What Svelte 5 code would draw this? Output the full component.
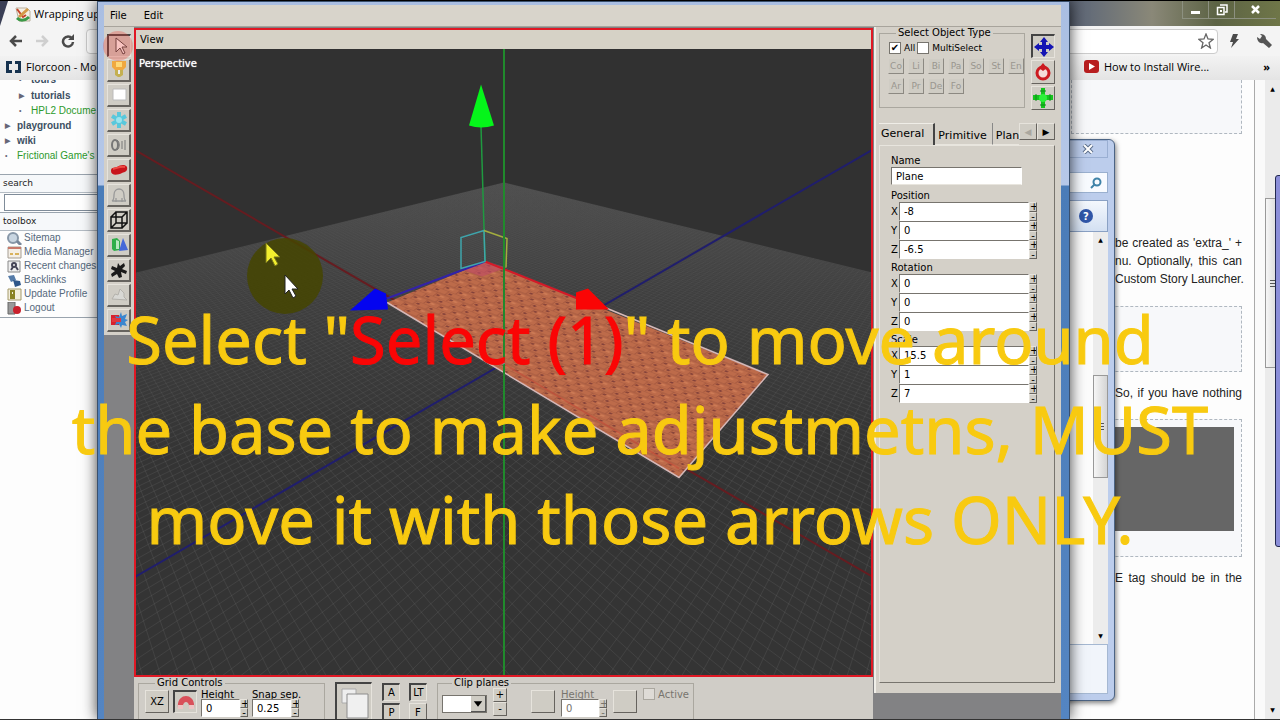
<script lang="ts">
  const tools: string[] = [
    'select', 'light', 'billboard', 'particle', 'sound', 'static',
    'entity', 'area', 'primitive', 'decal', 'fog', 'combo'
  ];

  const objectTypes: string[] = ['Co', 'Li', 'Bi', 'Pa', 'So', 'St', 'En', 'Ar', 'Pr', 'De', 'Fo'];

  const vectors = [
    { name: 'Position', values: ['-8', '0', '-6.5'] },
    { name: 'Rotation', values: ['0', '0', '0'] },
    { name: 'Scale', values: ['15.5', '1', '7'] }
  ];
  const axes = ['X', 'Y', 'Z'];

  const toolbox: string[] = [
    'Sitemap', 'Media Manager', 'Recent changes', 'Backlinks', 'Update Profile', 'Logout'
  ];

  // ground point to screen, camera looks along the diagonal of the grid
  function project(u: number, v: number) {
    const w = 1 + u + v;
    return { x: 504 + (542 * (u - v)) / w, y: 49 + 314 / w };
  }

  const size = 0.68;
  const near = 0.3;
  const lines = 80;

  function gridPath(): string {
    let d = '';
    for (let i = -lines; i <= lines; i++) {
      const c = (i / lines) * size;
      const end = Math.max(-size * 1.2, near - 1 - c);
      const a = project(c, size);
      const b = project(c, end);
      const e = project(size, c);
      const f = project(end, c);
      d += `M${a.x.toFixed(1)} ${a.y.toFixed(1)}L${b.x.toFixed(1)} ${b.y.toFixed(1)}`;
      d += `M${e.x.toFixed(1)} ${e.y.toFixed(1)}L${f.x.toFixed(1)} ${f.y.toFixed(1)}`;
    }
    return d;
  }

  const grid = gridPath();
</script>

{#snippet spinner(label: string, off: boolean = false)}
  <span class="spinner">
    <button type="button" aria-label={`Increase ${label}`} disabled={off}>+</button>
    <button type="button" aria-label={`Decrease ${label}`} disabled={off}>-</button>
  </span>
{/snippet}

<div class="desktop">
  <section class="browser">
    <header class="titlebar">
      <div class="browser-tab">
        <svg width="16" height="16" viewBox="0 0 16 16">
          <path d="M1 2h11l3 3v10H4z" fill="#f4efe4" stroke="#b9b09c" />
          <path d="M2 3l6 8 3-2" fill="none" stroke="#c5452c" stroke-width="2" />
          <path d="M4 11l9-8" stroke="#d49a46" stroke-width="3" />
          <path d="M2 12c3 3 8 3 12-1" fill="none" stroke="#3c9a48" stroke-width="3" />
        </svg>
        <span>Wrapping up</span>
      </div>
      <div class="window-buttons">
        <button type="button" aria-label="Minimize">
          <svg width="12" height="12" viewBox="0 0 12 12"><path d="M1 7h9v3H1z" fill="#fff" /></svg>
        </button>
        <button type="button" aria-label="Restore">
          <svg width="12" height="12" viewBox="0 0 12 12">
            <path d="M4 1h7v7H9M1.500 3.500h6.500v7H1.500z" fill="none" stroke="#fff" stroke-width="1.500" />
            <path d="M4 6h2v2H4z" fill="#fff" />
          </svg>
        </button>
        <button type="button" class="close" aria-label="Close">
          <svg width="12" height="12" viewBox="0 0 12 12"><path d="M2 2l7 7M9 2L2 9" stroke="#fff" stroke-width="2.500" /></svg>
        </button>
      </div>
    </header>

    <nav class="navbar">
      <button type="button" aria-label="Back">
        <svg width="16" height="14" viewBox="0 0 16 14"><path d="M14 7H3M8 2L3 7l5 5" fill="none" stroke="#4a4a4a" stroke-width="2.500" /></svg>
      </button>
      <button type="button" aria-label="Forward">
        <svg width="16" height="14" viewBox="0 0 16 14"><path d="M2 7h11M8 2l5 5-5 5" fill="none" stroke="#cfcfcf" stroke-width="2.500" /></svg>
      </button>
      <button type="button" aria-label="Reload">
        <svg width="16" height="14" viewBox="0 0 16 14">
          <path d="M12 4.500A5 5 0 1 0 13 8" fill="none" stroke="#4a4a4a" stroke-width="2.500" />
          <path d="M14 0v6H8z" fill="#4a4a4a" />
        </svg>
      </button>
      <div class="address">
        <input type="text" aria-label="Address" />
        <svg width="16" height="16" viewBox="0 0 16 16">
          <path d="M8 1l2 5 5 .4-4 3.300L12.400 15 8 12l-4.400 3L5 9.700 1 6.400 6 6z" fill="#fff" stroke="#666" stroke-width="1.300" />
        </svg>
      </div>
      <button type="button" aria-label="Extension">
        <svg width="12" height="14" viewBox="0 0 12 14"><path d="M5 0h5L8 5h3L3 14l2-6H2z" fill="#4a4a4a" /></svg>
      </button>
      <button type="button" class="wrench" aria-label="Settings">
        <svg width="16" height="15" viewBox="0 0 16 15">
          <path d="M1 3l3 2 2-3-2-2c3 0 6 1 6 5l6 6-3 3-6-5C4 10 1 7 1 3z" fill="#555" />
        </svg>
      </button>
    </nav>

    <div class="bookmarks">
      <a href="#florcoon">
        <svg width="15" height="12" viewBox="0 0 15 12">
          <path d="M0 0h6v3H3v6h3v3H0zM15 0H9v3h3v6H9v3h6z" fill="#16324f" />
        </svg>
        Florcoon - Mo
      </a>
      <span class="bookmarks-right">
        <a href="#wire">
          <svg width="15" height="13" viewBox="0 0 15 13">
            <rect width="15" height="13" rx="3" fill="#b81e20" /><path d="M5 3l6 3.500L5 10z" fill="#fff" />
          </svg>
          How to Install Wire...
        </a>
        <span class="more">»</span>
      </span>
    </div>

    <div class="page">
      <aside class="sidebar">
        <ul class="tree">
          <li class="deep cut"><i>•</i><a href="#tours">tours</a></li>
          <li class="deep"><i>▶</i><a href="#tutorials">tutorials</a></li>
          <li class="deep green"><i>•</i><a href="#hpl2">HPL2 Docume</a></li>
          <li><i>▶</i><a href="#playground">playground</a></li>
          <li><i>▶</i><a href="#wiki">wiki</a></li>
          <li class="green"><i>•</i><a href="#frictional">Frictional Game's</a></li>
        </ul>
        <label class="side-title" for="wiki-search">search</label>
        <div class="side-search"><input id="wiki-search" type="text" /></div>
        <div class="side-title">toolbox</div>
        <ul class="toolbox">
          {#each toolbox as item, i}
            <li>
              <svg width="15" height="13" viewBox="0 0 15 13">
                {#if i === 0}
                  <circle cx="6" cy="6" r="5" fill="#c9d6e2" stroke="#8797a8" stroke-width="2" /><path d="M10 9l4 4" stroke="#76869a" stroke-width="3" />
                {:else if i === 1}
                  <path d="M1 1h13v11H1z" fill="#f5efe6" stroke="#a59d92" /><path d="M1 2h13" stroke="#c8786a" stroke-width="2" /><path d="M3 8h3M8 8h4" stroke="#d9b25c" stroke-width="2" />
                {:else if i === 2}
                  <path d="M1 1h12v11H1z" fill="#eee" stroke="#888" /><circle cx="7" cy="5" r="2" fill="none" stroke="#445" stroke-width="2" /><path d="M4 10l2-3M9 7l2 3" stroke="#445" stroke-width="2" />
                {:else if i === 3}
                  <path d="M1 2l6-1 2 5-5 2z" fill="#557ba8" /><path d="M6 6l7 1 1 4-6 2z" fill="#2e568a" />
                {:else if i === 4}
                  <path d="M1 1h13v11H1z" fill="#f3eedd" stroke="#a59a6a" /><path d="M3 6h5v5H3z" fill="#8a8224" /><path d="M4 6V3h3v3" fill="none" stroke="#8a8224" stroke-width="2" />
                {:else}
                  <path d="M1 0h7v12H1z" fill="#999" stroke="#666" /><circle cx="10" cy="8" r="4" fill="#c9202c" />
                {/if}
              </svg>
              <a href={`#${item}`}>{item}</a>
            </li>
          {/each}
        </ul>
      </aside>

      <article class="article">
        <div class="code first"></div>
        <div class="para">
          <p>be created as 'extra_' +</p>
          <p>nu. Optionally, this can</p>
          <p>Custom Story Launcher.</p>
        </div>
        <div class="code second"></div>
        <div class="para short"><p>So, if you have nothing</p></div>
        <div class="code third"><div class="dark"></div></div>
        <div class="para short"><p>E tag should be in the</p></div>
      </article>

      <div class="page-scroll">
        <span>▲</span>
        <div class="page-thumb"><i></i></div>
        <span>▼</span>
      </div>
    </div>
  </section>

  <div class="gadget"></div>

  <section class="explorer">
    <button type="button" class="explorer-close" aria-label="Close window">
      <svg width="12" height="10" viewBox="0 0 12 10"><path d="M2 1l8 8M10 1L2 9" stroke="#5c6f8c" stroke-width="4" /><path d="M2 1l8 8M10 1L2 9" stroke="#fff" stroke-width="2" /></svg>
    </button>
    <div class="explorer-search">
      <svg width="12" height="12" viewBox="0 0 12 12"><circle cx="7" cy="5" r="3.500" fill="none" stroke="#3f83a8" stroke-width="2" /><path d="M5 7l-4 4" stroke="#3f83a8" stroke-width="2" /></svg>
    </div>
    <div class="explorer-bar"><button type="button" aria-label="Help">?</button></div>
    <div class="explorer-body">
      <div class="explorer-scroll">
        <span>▲</span>
        <div class="explorer-thumb"><i></i></div>
        <span>▼</span>
      </div>
    </div>
    <div class="explorer-status"></div>
  </section>

  <main class="editor">
    <nav class="menubar">
      <button type="button">File</button>
      <button type="button">Edit</button>
    </nav>

    <div class="workspace">
      <div class="rail">
        <div class="tools">
          {#each tools as tool, i}
            <button type="button" class="tool" class:pressed={i === 0} aria-label={tool}>
              <svg width="20" height="20" viewBox="0 0 20 20">
                {#if tool === 'select'}
                  <path d="M6 2v14l4-4 3 6 2-1-3-6h5z" fill="#fff" stroke="#444" />
                {:else if tool === 'light'}
                  <path d="M3 1h14v6l-3 3H6L3 7z" fill="#f0a840" /><path d="M7 2h6v5H7z" fill="#ffd978" /><path d="M6 10h8v5l-3 2H9l-3-2z" fill="#c4b050" /><path d="M9 10h2v4H9z" fill="#eee" />
                {:else if tool === 'billboard'}
                  <path d="M4 4h13v11H4z" fill="#fff" stroke="#bbb" />
                {:else if tool === 'particle'}
                  <path d="M10 2v16M3 6l14 8M17 6L3 14" stroke="#58c8dc" stroke-width="4" /><circle cx="10" cy="10" r="3" fill="#9be4ee" />
                {:else if tool === 'sound'}
                  <ellipse cx="6" cy="10" rx="3" ry="5" fill="none" stroke="#777" stroke-width="2" /><path d="M8 5c3 2 3 8 0 10M13 6v8M16 5v10" fill="none" stroke="#777" />
                {:else if tool === 'static'}
                  <path d="M2 11c0-4 3-3 6-4 3-2 8-3 10 0 1 4-2 5-5 6-4 2-11 3-11-2z" fill="#c8141c" /><path d="M4 9c4-1 8-3 12-2" stroke="#ee4a44" stroke-width="2" fill="none" />
                {:else if tool === 'entity'}
                  <path d="M3 16c2-1 2-3 2-6 0-8 10-8 10 0 0 3 0 5 2 6M3 16h14M7 17v-4M13 17v-4" fill="none" stroke="#999" stroke-width="1.300" />
                {:else if tool === 'area'}
                  <path d="M2 7h11v11H2zM7 2h11v11H7zM2 7l5-5M13 7l5-5M13 18l5-5M2 18l5-5" fill="none" stroke="#111" stroke-width="1.500" />
                {:else if tool === 'primitive'}
                  <path d="M3 4l5-1 3 3v9l-6 1-2-2z" fill="#2fae4a" /><path d="M10 16l4-13 5 12z" fill="#4668d8" /><path d="M7 5l3 1v8H7z" fill="#b8e8c0" />
                {:else if tool === 'decal'}
                  <path d="M9 3l2 3 4-3 1 3-3 3 5 2-1 3-5-2 1 5-3 1-2-4-5 3-1-3 4-3-4-2 1-3 5 2z" fill="#1a1a1a" />
                {:else if tool === 'fog'}
                  <path d="M3 14l3-5 3 1 2-6 4 4v4l3 3z" fill="#d8d8d4" stroke="#b4b2ac" />
                {:else}
                  <path d="M2 5h8v10H2z" fill="#d8222c" /><path d="M12 2l1 4 5-2-2 5 3 1-3 2 2 4-5-1-1 3-2-4-4 1 2-5-2-4 4 1z" fill="#3b86cf" /><path d="M3 8h9v4H3z" fill="#e03840" />
                {/if}
              </svg>
            </button>
          {/each}
        </div>
      </div>

      <div class="center">
        <div class="viewport">
          <div class="viewbar"><button type="button">View</button></div>
          <div class="scene">
            <svg viewBox="136 48 735 627" preserveAspectRatio="xMidYMid slice">
              <defs>
                <linearGradient id="floor" x1="0" y1="182" x2="0" y2="460" gradientUnits="userSpaceOnUse">
                  <stop offset="0" stop-color="#4c4c4c" />
                  <stop offset="0.400" stop-color="#3f3f3f" />
                  <stop offset="1" stop-color="#343434" />
                </linearGradient>
                <linearGradient id="fade" x1="0" y1="182" x2="0" y2="460" gradientUnits="userSpaceOnUse">
                  <stop offset="0" stop-color="#888" stop-opacity="0.030" />
                  <stop offset="1" stop-color="#888" stop-opacity="0.160" />
                </linearGradient>
                <pattern id="bricks" width="14" height="12" patternUnits="userSpaceOnUse" patternTransform="matrix(0.930 0.370 -0.800 0.600 485 261)">
                  <rect width="14" height="12" fill="#bd6b4a" />
                  <path d="M0 0h14M0 6h14M3 0v6M10 6v6" stroke="#a4583f" />
                  <rect x="5" y="2" width="3" height="2" fill="#84423a" />
                  <rect x="11" y="8" width="3" height="2" fill="#8a463a" />
                  <rect x="1" y="8" width="4" height="2" fill="#cc7a55" />
                </pattern>
              </defs>
              <rect x="-500" y="-500" width="2500" height="2000" fill="#313131" />
              <path d="M504 182L-500 428V1500H2000V548z" fill="url(#floor)" />
              <path d={grid} fill="none" stroke="url(#fade)" />
              <path d="M136 150L1100 708" stroke="#661c20" stroke-width="2" />
              <path d="M-92 708L871 150" stroke="#201e6c" stroke-width="2" />
              <path d="M485 261L768 374 679 477 387 302z" fill="url(#bricks)" />
              <path d="M387 302L679 477 768 374 600 305" fill="none" stroke="#d5b8b8" stroke-width="1.500" />
              <path d="M503 363L679 468" stroke="#c54a38" stroke-width="1.500" opacity="0.600" />
              <path d="M461 269L485 261 507 267 482 276z" fill="#c04a68" opacity="0.600" />
              <path d="M387 298L485 261" stroke="#3322a8" stroke-width="2" />
              <path d="M485 261L580 299" stroke="#d41a28" stroke-width="2" />
              <path d="M481 126L485 261" stroke="#1f9a40" stroke-width="1.500" />
              <path d="M461 268V237L484 230 485 261z" fill="none" stroke="#3fa5ac" stroke-width="1.500" />
              <path d="M484 230L507 238 506 267" fill="none" stroke="#a3ae3e" stroke-width="1.500" />
              <path d="M504 48V675" stroke="#208a2c" stroke-width="2" />
              <path d="M481 84L494 125q-13 4-25 0z" fill="#05f51a" />
              <path d="M350 310L375 288 386 293 388 309z" fill="#0404f0" />
              <path d="M576 309V292L588 288 609 309z" fill="#fa0505" />
              <circle cx="503" cy="362" r="2" fill="#7aa7b0" />
            </svg>
            <span class="scene-name">Perspective</span>
          </div>
        </div>

        <div class="bottombar">
          <fieldset class="grid-controls">
            <legend>Grid Controls</legend>
            <button type="button" class="square">XZ</button>
            <button type="button" class="square pressed" aria-label="Snap to grid">
              <svg width="20" height="16" viewBox="0 0 20 16"><path d="M2 14C0-2 20-2 18 14h-5c1-8-7-8-6 0z" fill="#d9505a" /><path d="M2 11h5v4H2zM13 11h5v4h-5z" fill="#eec4c4" /></svg>
            </button>
            <div class="field">
              <label for="grid-height">Height</label>
              <div class="number"><input id="grid-height" type="text" value="0" />{@render spinner('height')}</div>
            </div>
            <div class="field">
              <label for="snap">Snap sep.</label>
              <div class="number"><input id="snap" type="text" value="0.25" />{@render spinner('snap')}</div>
            </div>
          </fieldset>

          <button type="button" class="layers pressed" aria-label="Viewport layout">
            <svg width="32" height="34" viewBox="0 0 32 34">
              <path d="M4 2h14v14H4z" fill="#eee" stroke="#aaa" /><path d="M9 7h21v24H9z" fill="#f0f0f0" stroke="#8c8c8c" />
            </svg>
          </button>

          <div class="letters">
            <button type="button" class="pressed">A</button>
            <button type="button" class="pressed">LT</button>
            <button type="button" class="pressed">P</button>
            <button type="button">F</button>
          </div>

          <fieldset class="clip">
            <legend>Clip planes</legend>
            <div class="drop">
              <select aria-label="Clip plane"><option></option></select>
              <svg width="15" height="15" viewBox="0 0 15 15"><path d="M3 5h9l-4.500 6z" fill="#000" /></svg>
            </div>
            <div class="plusminus">
              <button type="button">+</button>
              <button type="button">-</button>
            </div>
            <button type="button" class="square" aria-label="Plane axis" disabled></button>
            <div class="field off">
              <label for="clip-height">Height</label>
              <div class="number"><input id="clip-height" type="text" value="0" disabled />{@render spinner('clip height', true)}</div>
            </div>
            <button type="button" class="square" aria-label="Flip side" disabled></button>
            <label class="check off"><input type="checkbox" disabled /> Active</label>
          </fieldset>
        </div>
      </div>

      <div class="inspector">
        <div class="inspector-body">
          <div class="inspector-top">
            <fieldset class="types">
              <legend>Select Object Type</legend>
              <div class="checks">
                <label class="check"><input type="checkbox" checked />All</label>
                <label class="check"><input type="checkbox" />MultiSelect</label>
              </div>
              <div class="type-grid">
                {#each objectTypes as type}
                  <button type="button" disabled>{type}</button>
                {/each}
              </div>
            </fieldset>
            <div class="gizmos">
              <button type="button" class="pressed" aria-label="Move">
                <svg width="20" height="20" viewBox="0 0 20 20">
                  <path d="M10 0l4 5h-2v3h3V6l5 4-5 4v-2h-3v3h2l-4 5-4-5h2v-3H5v2l-5-4 5-4v2h3V5H6z" fill="#1414b4" />
                </svg>
              </button>
              <button type="button" aria-label="Rotate">
                <svg width="20" height="20" viewBox="0 0 20 20">
                  <circle cx="10" cy="11" r="6" fill="#f4dcd8" stroke="#cc1a20" stroke-width="3" /><path d="M10 1l4 5-4 3-4-3z" fill="#cc1a20" />
                </svg>
              </button>
              <button type="button" aria-label="Scale">
                <svg width="20" height="20" viewBox="0 0 20 20">
                  <path d="M8 0h4v7h8v5h-8v8H8v-8H0V7h8z" fill="#14c41e" /><circle cx="10" cy="10" r="4" fill="#2cf03a" /><path d="M3 6v7M17 6v7M7 3h6M7 17h6" stroke="#118a18" />
                </svg>
              </button>
            </div>
          </div>

          <div class="tabs">
            <button type="button" class="tab active">General</button>
            <button type="button" class="tab">Primitive</button>
            <button type="button" class="tab plane">Plane</button>
            <button type="button" class="arrow" aria-label="Previous tab" disabled>◀</button>
            <button type="button" class="arrow" aria-label="Next tab">▶</button>
          </div>

          <div class="tab-panel">
            <label for="obj-name">Name</label>
            <input id="obj-name" class="name-input" type="text" value="Plane" />
            {#each vectors as vector}
              <div class="vector">
                <div class="vector-name">{vector.name}</div>
                {#each axes as axis, i}
                  <div class="axis">
                    <label for={`${vector.name}-${axis}`}>{axis}</label>
                    <div class="number">
                      <input id={`${vector.name}-${axis}`} type="text" value={vector.values[i]} />
                      {@render spinner(`${vector.name} ${axis}`)}
                    </div>
                  </div>
                {/each}
              </div>
            {/each}
          </div>
        </div>
      </div>
    </div>
  </main>

  <div class="click-ring"></div>
  <svg class="pointer" width="80" height="80" viewBox="0 0 80 80">
    <circle cx="40" cy="40" r="38" fill="#454500" opacity="0.850" />
    <path d="M21 7v20l5-5 4 8 3-2-4-7h6z" fill="#f2ee2e" stroke="#77751a" />
    <path d="M40 39v19l4-4 4 8 3-2-4-7h6z" fill="#fff" stroke="#222" />
  </svg>

  <p class="caption">
    Select "<em>Select (1)</em>" to move around<br />
    the base to make adjustmetns, MUST<br />
    move it with those arrows ONLY.
  </p>
</div>

<style>
  :global(body) {
    background: #fcfcfc;
  }

  * {
    box-sizing: border-box;
  }

  .desktop {
    position: relative;
    height: 100vh;
    overflow: hidden;
    border-top: 1px solid #000;
    border-bottom: 1px solid #333;
    font-family: "DejaVu Sans", Verdana, sans-serif;
    font-size: 10px;
    color: #000;
  }

  button {
    margin: 0;
    padding: 0;
    border: 0;
    background: none;
    font: inherit;
    color: inherit;
  }

  input,
  select {
    margin: 0;
    font: inherit;
    color: inherit;
    min-width: 0;
  }

  svg {
    display: block;
    flex: none;
  }

  a {
    color: inherit;
    text-decoration: none;
  }

  ul {
    list-style: none;
    margin: 0;
    padding: 0;
  }

  p {
    margin: 0;
  }

  /* browser */
  .browser {
    height: 100%;
    display: flex;
    flex-direction: column;
    background: #fdfdfd;
  }

  .titlebar {
    flex: none;
    height: 25px;
    display: flex;
    justify-content: space-between;
    background: linear-gradient(90deg, #3a3f55 0, #3a3f55 80%, #646c78 85%, #8a8878 90%, #5c6344 95%, #6f7648 100%);
  }

  .browser-tab {
    display: flex;
    align-items: center;
    gap: 3px;
    width: 220px;
    padding-left: 15px;
    background: #f4f4f4;
    clip-path: polygon(8px 0, 100% 0, 100% 100%, 0 100%);
    font: 11px "Open Sans", sans-serif;
  }

  .window-buttons {
    display: flex;
    height: 18px;
    margin-right: 4px;
  }

  .window-buttons button {
    width: 26px;
    display: grid;
    place-items: center;
    border: 1px solid #8c9080;
    border-top: 0;
    border-right: 0;
  }

  .window-buttons .close {
    width: 42px;
  }

  .navbar {
    flex: none;
    height: 30px;
    display: flex;
    align-items: center;
    gap: 10px;
    padding: 0 8px;
    background: #f4f4f4;
  }

  .address {
    flex: 1;
    height: 25px;
    display: flex;
    align-items: center;
    padding-right: 3px;
    border: 1px solid #ccc;
    border-radius: 4px;
    background: #fff;
  }

  .address input {
    flex: 1;
    border: 0;
    background: none;
  }

  .wrench {
    margin-left: 6px;
  }

  .bookmarks {
    flex: none;
    height: 24px;
    display: flex;
    align-items: center;
    justify-content: space-between;
    padding: 0 10px 3px 6px;
    background: linear-gradient(#f2f2f2, #e4e4e4);
    font: 11px "Open Sans", sans-serif;
  }

  .bookmarks a {
    display: flex;
    align-items: center;
    gap: 5px;
  }

  .bookmarks-right {
    display: flex;
    gap: 54px;
  }

  .more {
    font-weight: bold;
  }

  .page {
    flex: 1;
    min-height: 0;
    display: flex;
  }

  .sidebar {
    width: 110px;
    flex: none;
    overflow: hidden;
    white-space: nowrap;
    font: 10px/14px "DejaVu Sans", sans-serif;
  }

  .tree {
    height: 94px;
    padding-left: 5px;
    overflow: hidden;
    font: bold 10px/16px "Liberation Sans", sans-serif;
    color: #3c5063;
  }

  .tree li {
    display: flex;
    align-items: center;
    height: 15px;
  }

  .tree li.cut {
    height: 8px;
    align-items: flex-end;
    overflow: hidden;
  }

  .tree i {
    width: 12px;
    font-size: 7px;
    font-style: normal;
    color: #667;
  }

  .tree .deep {
    padding-left: 14px;
  }

  .tree .green {
    font-weight: normal;
    color: #2c9a2c;
  }

  .side-title {
    display: block;
    height: 19px;
    padding-left: 3px;
    border-top: 1px solid #9aa4ae;
    border-bottom: 1px solid #b4bcc4;
    background: #f6f8fa;
    font: 9px/17px "DejaVu Sans", sans-serif;
    color: #222;
  }

  .side-search {
    padding: 1px 0 1px 4px;
  }

  .side-search input {
    display: block;
    width: 120px;
    height: 17px;
    border: 1px solid #7f8c99;
    background: #fff;
  }

  .toolbox {
    padding: 0 0 2px 7px;
    border-bottom: 1px solid #9aa4ae;
    color: #56697c;
    font: 10px/14px "Liberation Sans", sans-serif;
  }

  .toolbox li {
    display: flex;
    align-items: center;
    gap: 2px;
    height: 14px;
  }

  .article {
    width: 184px;
    flex: none;
    margin-left: auto;
    padding: 0 12px 0 44px;
    border-right: 1px solid #aaa;
    font: 12px/18px "Liberation Sans", sans-serif;
    color: #222;
  }

  .para p {
    text-align: justify;
    text-align-last: justify;
    white-space: nowrap;
  }

  .code {
    margin-left: -44px;
    border: 1px dashed #b0b8c0;
    background: #f7f8fa;
  }

  .first {
    height: 54px;
    border-top: 0;
    margin-bottom: 100px;
  }

  .second {
    height: 66px;
    margin-top: 18px;
  }

  .short {
    padding: 12px 0 17px;
  }

  .third {
    height: 138px;
    padding: 7px 7px 0 0;
  }

  .dark {
    height: 104px;
    background: #666;
  }

  .page-scroll {
    width: 25px;
    flex: none;
    display: flex;
    flex-direction: column;
    border-left: 10px solid #fafafa;
    background: #ebebeb;
    font-size: 6px;
    text-align: center;
  }

  .page-scroll span {
    height: 18px;
    line-height: 18px;
  }

  .page-thumb,
  .explorer-thumb {
    display: grid;
    place-items: center;
    border: 1px solid #999;
    background: linear-gradient(90deg, #f6f6f6, #d4d4d4);
  }

  .page-thumb {
    height: 170px;
    margin: 100px 0 auto;
  }

  .page-thumb i,
  .explorer-thumb i {
    width: 6px;
    height: 7px;
    border-top: 1px solid #555;
    border-bottom: 1px solid #555;
    background: linear-gradient(transparent 2px, #555 2px, #555 3px, transparent 3px);
  }

  .gadget {
    position: absolute;
    top: 174px;
    right: -6px;
    width: 11px;
    height: 372px;
    border: 1px solid #222850;
    border-radius: 3px;
    background: #8b8ed8;
  }

  /* explorer window */
  .explorer {
    position: absolute;
    top: 138px;
    right: 165px;
    width: 60px;
    height: 562px;
    display: flex;
    flex-direction: column;
    padding: 0 6px 6px 0;
    border: 1px solid #4c6484;
    border-radius: 0 6px 6px 0;
    background: #bccdec;
    box-shadow: 1px 2px 5px rgba(0, 0, 0, 0.5);
  }

  .explorer-close {
    align-self: flex-end;
    width: 40px;
    height: 18px;
    display: grid;
    place-items: center;
    border: 1px solid #9aafd2;
    margin-bottom: 14px;
  }

  .explorer-search {
    height: 21px;
    flex: none;
    display: flex;
    align-items: center;
    justify-content: flex-end;
    padding-right: 5px;
    margin-bottom: 7px;
    border: 1px solid #9ab0cf;
    background: #f8fbff;
  }

  .explorer-bar {
    height: 32px;
    flex: none;
    display: flex;
    align-items: center;
    justify-content: flex-end;
    padding-right: 14px;
    border: 1px solid #8aa1c4;
    background: linear-gradient(#f4f8fd, #d3e0f2);
  }

  .explorer-bar button {
    width: 14px;
    height: 14px;
    border-radius: 50%;
    background: #3056a8;
    color: #fff;
    font-weight: bold;
  }

  .explorer-body {
    flex: 1;
    display: flex;
    justify-content: flex-end;
    background: #fcfcfc;
  }

  .explorer-scroll {
    width: 15px;
    display: flex;
    flex-direction: column;
    background: #ececec;
    font-size: 6px;
    line-height: 16px;
    text-align: center;
  }

  .explorer-thumb {
    height: 103px;
    margin: 127px 0 auto;
  }

  .explorer-status {
    height: 50px;
    flex: none;
    border: 1px solid #a5b8d2;
    background: #f1f5fb;
  }

  /* editor window */
  .editor {
    position: absolute;
    top: 0;
    right: 210px;
    bottom: 0;
    left: 97px;
    display: flex;
    flex-direction: column;
    padding: 3px 8px 0 6px;
    background: linear-gradient(#a9bee2 0, #b6c8e8 183px, #4a7cb8 184px, #5485c2 100%);
    border: 1px solid #39506e;
    border-bottom: 0;
    box-shadow: 0 0 14px rgba(0, 0, 0, 0.75);
  }

  .menubar {
    flex: none;
    height: 22px;
    display: flex;
    align-items: center;
    gap: 17px;
    padding-left: 6px;
    border-bottom: 1px solid #a8a49c;
    background: #d8d4cb;
  }

  .workspace {
    flex: 1;
    min-height: 0;
    display: flex;
    background: #828284;
  }

  .rail {
    width: 30px;
    flex: none;
  }

  .tools {
    display: flex;
    flex-direction: column;
    gap: 2px;
    padding: 7px 0 3px 3px;
    background: #d4d0c8;
  }

  .tool,
  .square,
  .layers,
  .letters button,
  .plusminus button,
  .gizmos button,
  .type-grid button,
  .arrow,
  .spinner button {
    display: grid;
    place-items: center;
    border: 1px solid #e6e3dc;
    border-right-color: #66635e;
    border-bottom-color: #66635e;
    background: #cfccc4;
  }

  .tool {
    width: 24px;
    height: 23px;
    border-right-width: 2px;
    border-bottom-width: 2px;
  }

  button.pressed {
    border: 1px solid #e6e3dc;
    border-top: 2px solid #444;
    border-left: 2px solid #444;
  }

  .center {
    flex: 1;
    min-width: 0;
    display: flex;
    flex-direction: column;
  }

  .viewport {
    flex: 1;
    min-height: 0;
    display: flex;
    flex-direction: column;
    margin-top: 1px;
    border: 2px solid #e01824;
  }

  .viewbar {
    flex: none;
    height: 19px;
    display: flex;
    align-items: center;
    padding-left: 4px;
    background: #d6d2c6;
  }

  .scene {
    position: relative;
    flex: 1;
    min-height: 0;
    overflow: hidden;
  }

  .scene > svg {
    width: 100%;
    height: 100%;
  }

  .scene-name {
    position: absolute;
    top: 9px;
    left: 3px;
    color: #fff;
    text-shadow: 0 0 1px #fff;
  }

  .bottombar {
    flex: none;
    height: 42px;
    overflow: hidden;
    display: flex;
    align-items: flex-start;
    gap: 10px;
    padding: 1px 0 0 4px;
    background: #d0cdc7;
    white-space: nowrap;
  }

  fieldset {
    display: flex;
    margin: 0;
    min-width: 0;
    border: 1px solid #aaa79f;
  }

  legend {
    padding: 0 2px;
    line-height: 10px;
  }

  .bottombar fieldset {
    height: 52px;
  }

  .grid-controls {
    width: 187px;
    gap: 4px;
    padding: 2px 6px;
  }

  .grid-controls legend,
  .clip legend {
    margin-left: 10px;
  }

  .square {
    width: 24px;
    height: 23px;
    flex: none;
  }

  .field {
    width: 47px;
  }

  .field label {
    display: block;
    height: 9px;
    line-height: 9px;
  }

  .number {
    display: flex;
    flex: 1;
    height: 18px;
  }

  .number input,
  .name-input {
    flex: 1;
    width: 100%;
    padding: 0 4px;
    border: 1px solid #fff;
    border-top-color: #77746e;
    border-left-color: #77746e;
    background: #fff;
  }

  .spinner {
    width: 8px;
    flex: none;
    display: flex;
    flex-direction: column;
  }

  .spinner button {
    flex: 1;
    min-height: 0;
    width: 8px;
    line-height: 7px;
    overflow: hidden;
  }

  .layers {
    width: 37px;
    height: 42px;
    margin-top: 4px;
  }

  .letters {
    display: grid;
    grid-template-columns: 18px 18px;
    grid-auto-rows: 18px;
    gap: 2px 9px;
    padding-top: 5px;
  }

  .clip {
    width: 257px;
    gap: 6px;
    padding: 0 4px;
  }

  .drop {
    display: flex;
    height: 18px;
    margin-top: 7px;
    border: 1px solid #77746e;
    background: #fff;
  }

  .drop select {
    width: 28px;
    padding: 0;
    border: 0;
    appearance: none;
    background: #fff;
  }

  .drop svg {
    height: 16px;
    background: #cfccc4;
    border-right: 1px solid #555;
    border-bottom: 1px solid #555;
  }

  .plusminus {
    width: 14px;
    margin-right: 18px;
  }

  .plusminus button {
    width: 14px;
    height: 14px;
    line-height: 12px;
  }

  .clip .square,
  .clip .field {
    margin-top: 2px;
  }

  .off,
  .off input {
    color: #77746e;
  }

  .check {
    display: flex;
    align-items: center;
    gap: 3px;
    height: 12px;
  }

  .check input {
    width: 12px;
    height: 12px;
    appearance: none;
    display: grid;
    place-items: center;
    border: 1px solid #77746e;
    background: #fff;
  }

  .check.off input {
    border-color: #aaa79f;
    background: #dedbd6;
  }

  .check input:checked::before {
    content: "✔";
    font-size: 10px;
    line-height: 10px;
    color: #000;
  }

  .inspector {
    width: 188px;
    flex: none;
    padding-left: 1px;
  }

  .inspector-body {
    display: flex;
    flex-direction: column;
    height: calc(100% - 26px);
    padding: 1px 6px 10px 3px;
    border-left: 2px solid #f0eee8;
    background: #d4d0c8;
  }

  .inspector-top {
    display: flex;
    gap: 6px;
  }

  .types {
    flex: 1;
    display: block;
    height: 80px;
    padding: 4px 2px 0 6px;
  }

  .types legend {
    margin-left: 10px;
  }

  .checks {
    display: flex;
    gap: 2px;
    padding-left: 3px;
    margin-bottom: 4px;
    font-size: 9px;
  }

  .type-grid {
    display: grid;
    grid-template-columns: repeat(7, 16px);
    grid-auto-rows: 16px;
    gap: 4px;
    padding-left: 2px;
  }

  .type-grid button {
    border-color: #d4d0c8 #8c8982 #8c8982 #d4d0c8;
    font-size: 9px;
    color: #99968f;
  }

  .gizmos {
    display: flex;
    flex-direction: column;
    gap: 2px;
    padding-top: 6px;
  }

  .gizmos button {
    width: 24px;
    height: 24px;
  }

  .tabs {
    display: flex;
    height: 22px;
    margin-top: 13px;
    font-size: 11px;
  }

  .tab {
    flex: none;
    padding: 3px 5px 0 3px;
    border-right: 1px solid #888;
    border-bottom: 1px solid #e8e5de;
  }

  .tab.active {
    padding: 0 9px 2px 2px;
    border-right: 2px solid #444;
    border-bottom: 0;
    border-top: 1px solid #efede7;
  }

  .tab.plane {
    flex: 1;
    min-width: 0;
    border-right: 0;
    overflow: hidden;
    text-align: left;
  }

  .arrow {
    width: 18px;
    height: 17px;
    flex: none;
    font-size: 9px;
  }

  .arrow:disabled {
    color: #aaa79f;
  }

  .tab-panel {
    flex: 1;
    min-height: 0;
    padding: 8px 17px 0 11px;
    border: 1px solid #e8e5de;
    border-right-color: #77746e;
    border-bottom-color: #77746e;
    line-height: 13px;
  }

  .tab-panel > label {
    display: block;
  }

  .name-input {
    display: block;
    width: 131px;
    height: 18px;
    margin-bottom: 5px;
    border-bottom-color: #e8e5de;
  }

  .vector {
    margin-bottom: 3px;
  }

  .vector-name {
    height: 12px;
    line-height: 12px;
  }

  .axis {
    display: flex;
    align-items: center;
    height: 19px;
  }

  .axis label {
    width: 8px;
    flex: none;
  }

  .axis .number {
    height: 19px;
  }

  /* recording overlay */
  .click-ring {
    position: absolute;
    top: 30px;
    left: 103px;
    width: 30px;
    height: 30px;
    border-radius: 50%;
    background: rgba(235, 60, 50, 0.3);
    pointer-events: none;
  }

  .pointer {
    position: absolute;
    top: 235px;
    left: 245px;
    pointer-events: none;
  }

  .caption {
    position: absolute;
    top: 293px;
    right: 0;
    left: 0;
    text-align: center;
    white-space: nowrap;
    font: 65px/90px "Comic Sans MS", "Noto Sans", sans-serif;
    color: #f8ca10;
    -webkit-text-stroke: 1px currentColor;
    pointer-events: none;
  }

  .caption em {
    font-style: normal;
    color: #fa0505;
  }
</style>
